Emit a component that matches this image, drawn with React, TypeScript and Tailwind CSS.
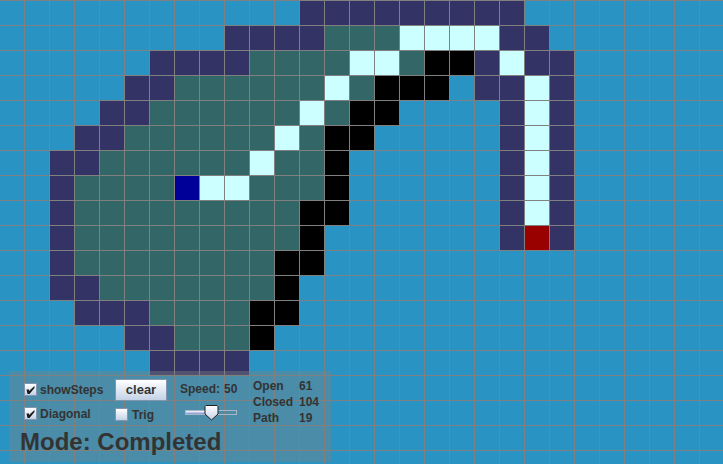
const ROWS = [
  '............nnnnnnnnn',
  '.........nnnngggwwwwnn',
  '......nnnnggggwwgkknwnn',
  '.....nnggggggwgkkk.nnwn',
  '....nnggggggwgkk....nwn',
  '...nnggggggwgkk.....nwn',
  '..nnggggggwggk......nwn',
  '..nggggswwgggk......nwn',
  '..ngggggggggkk......nwn',
  '..ngggggggggk.......nen',
  '..nggggggggkk',
  '..nngggggggk',
  '...nnnggggkk',
  '.....nngggk',
  '......nnnn',
  '',
  '',
  '',
  '',
];

const CELL_COLORS: Record<string, string> = {
  '.': 'bg-[#2994c4]',
  n: 'bg-[#333366]',
  g: 'bg-[#336666]',
  w: 'bg-[#ccffff]',
  k: 'bg-black',
  s: 'bg-[#000099]',
  e: 'bg-[#990000]',
};

function Board() {
  const cells: string[] = [];
  ROWS.forEach((row) => {
    const full = row.padEnd(29, '.');
    for (const c of full) cells.push(c);
  });
  return (
    <div className="grid w-[725px] grid-cols-[repeat(29,24px)] grid-rows-[repeat(19,24px)] gap-px bg-[#808080] pt-px">
      {cells.map((c, i) => (
        <div key={i} className={CELL_COLORS[c]} />
      ))}
    </div>
  );
}

function Check({ checked }: { checked?: boolean }) {
  return (
    <div className="flex size-[13px] shrink-0 items-center justify-center border border-[#8496ae] bg-gradient-to-b from-white to-[#c4d2e6]">
      {checked && (
        <svg width="9" height="8" viewBox="0 0 9 8">
          <path d="M0.5 3.5 L3 3.5 L3 5 L8.5 0 L8.5 2 L3.5 8 L1.5 8 Z" fill="#1c1c1c" />
        </svg>
      )}
    </div>
  );
}

function Stat({ label, value }: { label: string; value: string }) {
  return (
    <div className="flex h-4 items-center">
      <span className="w-[46px]">{label}</span>
      <span>{value}</span>
    </div>
  );
}

export default function App() {
  return (
    <div className="relative h-[464px] w-[723px] overflow-hidden font-['Liberation_Sans',Arial,sans-serif]">
      <Board />

      {/* control panel floats over the board */}
      <div className="absolute left-[9px] top-[371px] h-[91px] w-[322px] bg-[#80808066] text-[#333333]">
        <div className="flex pl-[15px] pt-[7px] text-[12px] font-semibold">
          <div className="flex w-[91px] flex-col gap-[11px] pt-[5px]">
            <div className="flex h-[13px] items-center gap-[3px]">
              <Check checked />
              <span>showSteps</span>
            </div>
            <div className="flex h-[13px] items-center gap-[3px]">
              <Check checked />
              <span>Diagonal</span>
            </div>
          </div>
          <div className="flex w-[65px] flex-col gap-[7px] pt-px">
            <button className="h-[22px] w-[52px] border border-[#8496ae] bg-gradient-to-b from-white to-[#c4d2e6] text-[13px] font-semibold">
              clear
            </button>
            <div className="flex h-[13px] items-center gap-[4px]">
              <Check />
              <span>Trig</span>
            </div>
          </div>
          <div className="flex w-[73px] flex-col pt-[5px]">
            <div className="flex h-3 items-center gap-[4px]">
              <span>Speed:</span>
              <span>50</span>
            </div>
            <div className="relative ml-[5px] mt-[15px] flex h-[5px] w-[52px] border border-[#a9b6c4]">
              <div className="h-full w-[20px] bg-gradient-to-b from-white to-[#7f90d0]" />
              <svg className="absolute left-[18px] top-[-6px]" width="15" height="16" viewBox="0 0 15 16">
                <defs>
                  <linearGradient id="thumb" x1="0" y1="0" x2="0" y2="1">
                    <stop offset="0" stopColor="#ffffff" />
                    <stop offset="1" stopColor="#c4d2e6" />
                  </linearGradient>
                </defs>
                <path d="M2 0.5 H13 L14 1.5 V9 L7.5 15 L1 9 V1.5 Z" fill="url(#thumb)" stroke="#1f1f1f" />
              </svg>
            </div>
          </div>
          <div className="flex flex-col">
            <Stat label="Open" value="61" />
            <Stat label="Closed" value="104" />
            <Stat label="Path" value="19" />
          </div>
        </div>
        <div className="pl-[11px] pt-[4px] text-[24px] font-bold leading-6">Mode: Completed</div>
      </div>
    </div>
  );
}
